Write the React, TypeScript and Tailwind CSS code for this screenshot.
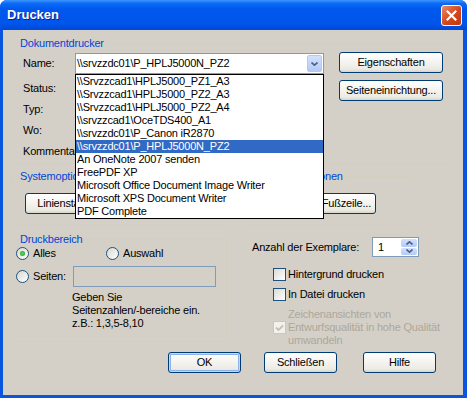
import React from "react";

const printers = [
  "\\\\Srvzzcad1\\HPLJ5000_PZ1_A3",
  "\\\\Srvzzcad1\\HPLJ5000_PZ2_A3",
  "\\\\Srvzzcad1\\HPLJ5000_PZ2_A4",
  "\\\\srvzzcad1\\OceTDS400_A1",
  "\\\\srvzzdc01\\P_Canon iR2870",
  "\\\\srvzzdc01\\P_HPLJ5000N_PZ2",
  "An OneNote 2007 senden",
  "FreePDF XP",
  "Microsoft Office Document Image Writer",
  "Microsoft XPS Document Writer",
  "PDF Complete",
];

const XpButton = ({
  label,
  className = "",
  def = false,
  end = false,
}: {
  label: string;
  className?: string;
  def?: boolean;
  end?: boolean;
}) => (
  <button
    className={`h-[21px] rounded-[3px] border border-[#003c74] bg-[linear-gradient(to_bottom,#ffffff_0%,#f5f4f0_45%,#ebeae3_85%,#d8d4c8_100%)] text-black text-[11px] leading-none flex items-center whitespace-nowrap ${end ? "justify-end pr-[4px]" : "justify-center"} ${def ? "shadow-[inset_0_0_0_1px_#c3d7f8,inset_0_0_0_2px_#8db2ec]" : ""} ${className}`}
  >
    {label}
  </button>
);

const Radio = ({ checked = false }: { checked?: boolean }) => (
  <span className="w-[13px] h-[13px] shrink-0 rounded-full border border-[#1c5180] bg-[linear-gradient(135deg,#d8d7cf,#ffffff)] flex items-center justify-center">
    {checked && <span className="w-[5px] h-[5px] rounded-full bg-[radial-gradient(circle,#5fd85f,#1d9a1d)]" />}
  </span>
);

const Check = () => (
  <span className="w-[13px] h-[13px] shrink-0 border border-[#1c5180] bg-[linear-gradient(135deg,#dcdbd3,#ffffff)]" />
);

const Chevron = ({ up = false }: { up?: boolean }) => (
  <svg width="7" height="4" viewBox="0 0 7 4">
    <path d={up ? "M0.5 3.5 L3.5 0.8 L6.5 3.5" : "M0.5 0.5 L3.5 3.2 L6.5 0.5"} fill="none" stroke="#4d6185" strokeWidth="1.6" />
  </svg>
);

const App = () => {
  return (
    <div
      className="w-[467px] h-[398px] bg-[#0a55e0] rounded-t-[7px] flex flex-col text-[11px] tracking-[-0.2px] text-black"
      style={{ fontFamily: '"Liberation Sans", Arial, sans-serif' }}
    >
      {/* title bar */}
      <div className="h-[30px] shrink-0 rounded-t-[7px] bg-[linear-gradient(to_bottom,#3d95ff_0%,#0a6af5_12%,#0058ee_30%,#0055ea_80%,#0048d4_100%)] flex items-center justify-between pl-[7px] pr-[5px]">
        <span className="text-white font-bold text-[13px] tracking-normal [text-shadow:1px_1px_0_#0a1f8a]">Drucken</span>
        <div className="w-[21px] h-[21px] rounded-[3px] border border-white bg-[linear-gradient(135deg,#e98a6a,#d2461c_55%,#c13a12)] flex items-center justify-center">
          <svg width="11" height="11" viewBox="0 0 11 11">
            <path d="M1.5 1.5 L9.5 9.5 M9.5 1.5 L1.5 9.5" stroke="white" strokeWidth="2.2" strokeLinecap="square" />
          </svg>
        </div>
      </div>

      {/* client area */}
      <div className="flex-1 ml-[3px] mr-[4px] mb-[3px] bg-[#d4d0c8] pt-[7px] pl-[8px] flex flex-col">
        {/* Dokumentdrucker */}
        <fieldset className="w-[441px] border border-[#d0d0bf] rounded-[3px]">
          <legend className="ml-[6px] px-[2px] leading-[13px] text-[#0046d5]">Dokumentdrucker</legend>
          <div className="flex pt-[3px] pb-[5px] pl-[11px]">
            <div className="flex flex-col">
              <div className="flex items-center h-[21px]">
                <span className="w-[52px]">Name:</span>
                <div className="relative w-[249px] h-[21px] border border-[#7f9db9] bg-white flex items-center z-10">
                  <span className="flex-1 pl-[1px] whitespace-nowrap">{"\\\\srvzzdc01\\P_HPLJ5000N_PZ2"}</span>
                  <span className="w-[15px] h-[17px] mr-px rounded-[2px] border border-[#b7c8ef] bg-[linear-gradient(to_bottom,#d3e1fe,#b4c9f6)] flex items-center justify-center">
                    <Chevron />
                  </span>
                  <div className="absolute left-[-1px] top-[20px] w-[249px] border border-black bg-white">
                    {printers.map((p, i) => (
                      <div
                        key={p}
                        className={`h-[13px] leading-[13px] pl-[1px] whitespace-nowrap overflow-hidden ${i === 5 ? "bg-[#316ac5] text-white" : ""}`}
                      >
                        {p}
                      </div>
                    ))}
                  </div>
                </div>
              </div>
              <div className="mt-[7px] h-[14px] leading-[14px]">Status:</div>
              <div className="mt-[7px] h-[14px] leading-[14px]">Typ:</div>
              <div className="mt-[7px] h-[14px] leading-[14px]">Wo:</div>
              <div className="mt-[7px] h-[14px] leading-[14px]">Kommentar:</div>
            </div>
            <div className="ml-[15px] -mt-px flex flex-col gap-[7px]">
              <XpButton label="Eigenschaften" className="w-[104px]" />
              <XpButton label="Seiteneinrichtung..." className="w-[104px]" />
            </div>
          </div>
        </fieldset>

        {/* Systemoptionen row */}
        <div className="flex mt-[6px]">
          <fieldset className="w-[216px] border border-[#d0d0bf] rounded-[3px]">
            <legend className="ml-[6px] px-[2px] leading-[13px] text-[#0046d5]">Systemoptionen</legend>
            <div className="pt-[10px] pb-[11px] pl-[13px]">
              <XpButton label="Linienstärken..." className="w-[96px]" />
            </div>
          </fieldset>
          <fieldset className="ml-[18px] w-[167px] border border-[#d0d0bf] rounded-[3px]">
            <legend className="ml-[17px] px-[2px] leading-[13px] text-[#0046d5]">Druckeroptionen</legend>
            <div className="pt-[10px] pb-[11px] pl-[11px]">
              <XpButton label="Kopf- und Fußzeile..." end className="w-[119px]" />
            </div>
          </fieldset>
        </div>

        {/* Druckbereich + Exemplare */}
        <div className="flex items-start">
          <fieldset className="mt-[7px] w-[216px] border border-[#d0d0bf] rounded-[3px]">
            <legend className="ml-[6px] px-[2px] leading-[13px] text-[#0046d5]">Druckbereich</legend>
            <div className="pt-[1px] pb-[11px] pl-[4px] flex flex-col">
              <div className="flex items-center h-[13px]">
                <div className="w-[90px] flex items-center">
                  <Radio checked />
                  <span className="ml-[4px]">Alles</span>
                </div>
                <Radio />
                <span className="ml-[4px]">Auswahl</span>
              </div>
              <div className="flex items-center h-[21px] mt-[6px]">
                <Radio />
                <span className="ml-[4px] w-[40px]">Seiten:</span>
                <div className="w-[143px] h-[21px] border border-[#7f9db9]" />
              </div>
              <div className="ml-[56px] mt-[4px] leading-[13px]">
                Geben Sie
                <br />
                Seitenzahlen/-bereiche ein.
                <br />
                z.B.: 1,3,5-8,10
              </div>
            </div>
          </fieldset>

          <div className="ml-[18px] flex flex-col">
            <div className="mt-[11px] pl-[7px] flex items-center h-[20px]">
              <span className="w-[120px]">Anzahl der Exemplare:</span>
              <div className="w-[47px] h-[20px] border border-[#7f9db9] bg-white flex items-center">
                <span className="flex-1 pl-[5px]">1</span>
                <div className="w-[16px] h-[16px] mr-px flex flex-col gap-px">
                  <span className="flex-1 rounded-[2px] bg-[linear-gradient(to_bottom,#d3e1fe,#b4c9f6)] flex items-center justify-center">
                    <Chevron up />
                  </span>
                  <span className="flex-1 rounded-[2px] bg-[linear-gradient(to_bottom,#d3e1fe,#b4c9f6)] flex items-center justify-center">
                    <Chevron />
                  </span>
                </div>
              </div>
            </div>
            <div className="mt-[11px] ml-[28px] flex items-center h-[13px]">
              <Check />
              <span className="ml-[2px]">Hintergrund drucken</span>
            </div>
            <div className="mt-[7px] ml-[28px] flex items-center h-[13px]">
              <Check />
              <span className="ml-[2px]">In Datei drucken</span>
            </div>
            <div className="mt-[7px] ml-[28px] flex items-center">
              <span className="w-[13px] h-[13px] shrink-0 border border-[#cac8bb] bg-[#f2f1ec] flex items-center justify-center">
                <svg width="9" height="8" viewBox="0 0 9 8">
                  <path d="M1 3.5 L3.5 6 L8 1.5" fill="none" stroke="#c4c2b6" strokeWidth="1.8" />
                </svg>
              </span>
              <span className="ml-[2px] leading-[13px] text-[#aca899] whitespace-nowrap">
                Zeichenansichten von
                <br />
                Entwurfsqualität in hohe Qualität
                <br />
                umwandeln
              </span>
            </div>
          </div>
        </div>

        {/* bottom buttons */}
        <div className="mt-[5px] pl-[157px] flex">
          <XpButton label="OK" def className="w-[73px]" />
          <XpButton label="Schließen" className="w-[73px] ml-[23px]" />
          <XpButton label="Hilfe" className="w-[73px] ml-[26px]" />
        </div>
      </div>
    </div>
  );
};

export default App;
